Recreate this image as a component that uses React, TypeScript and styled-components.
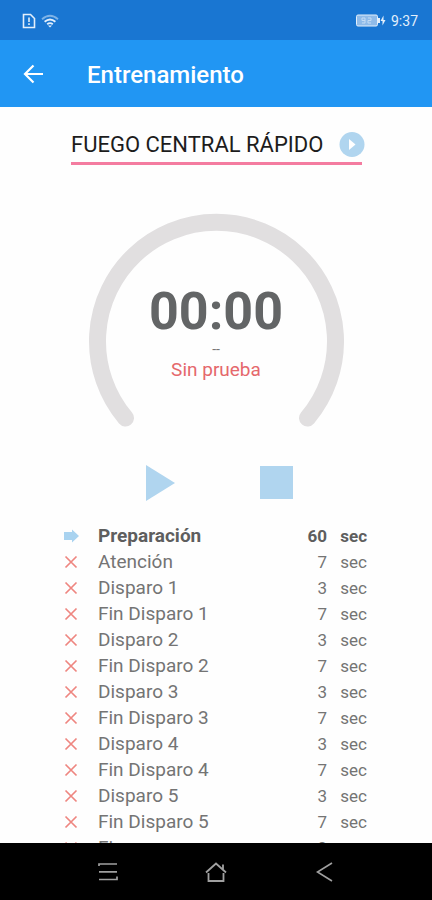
import React from "react";
import styled, { createGlobalStyle } from "styled-components";

const GlobalStyle = createGlobalStyle`
  *, *::before, *::after { box-sizing: border-box; }
  body {
    margin: 0;
    background: #fefefe;
    font-family: Roboto, "Noto Sans", sans-serif;
  }
  button { border: 0; padding: 0; background: none; cursor: pointer; }
  svg { display: block; }
`;

const Screen = styled.div`
  display: flex;
  flex-direction: column;
  height: 100vh;
  overflow: hidden;
`;

const StatusBar = styled.div`
  display: flex;
  flex: none;
  align-items: center;
  justify-content: space-between;
  height: 40px;
  padding: 1px 14px 0 22px;
  background: #1976d2;
  color: #e3effb;
`;

const StatusGroup = styled.div`
  display: flex;
  align-items: center;
  gap: 5px;
`;

const Clock = styled.time`
  font-size: 14px;
  line-height: 20px;
`;

const AppBar = styled.header`
  display: flex;
  flex: none;
  align-items: center;
  gap: 41px;
  height: 67px;
  padding: 2px 20px 0;
  background: #2196f3;
  color: #fff;
`;

const IconButton = styled.button`
  display: grid;
  place-items: center;
  flex: none;
  color: inherit;
`;

const Title = styled.h1`
  margin: 0;
  font-size: 24px;
  font-weight: 500;
  line-height: 28px;
`;

const Main = styled.main`
  display: flex;
  flex: 1;
  flex-direction: column;
  min-height: 0;
  padding-top: 20px;
  overflow: hidden;
`;

const Picker = styled.div`
  display: flex;
  flex: none;
  align-items: center;
  margin: 0 70px 0 71px;
  height: 38px;
  border-bottom: 3px solid #f47ca0;
  color: #b0d5ef;
`;

const ExerciseSelect = styled.select`
  flex: 1;
  min-width: 0;
  padding: 0;
  border: 0;
  appearance: none;
  background: transparent;
  color: #1c1c1c;
  font-family: inherit;
  font-size: 22px;
  line-height: 30px;
`;

const PickerButton = styled(IconButton)`
  margin-right: -3px;
`;

const Dial = styled.section`
  display: grid;
  flex: none;
  align-self: center;
  margin-top: 48px;
  > * { grid-area: 1 / 1; }
`;

const Readout = styled.div`
  display: flex;
  flex-direction: column;
  align-items: center;
  padding-top: 69px;
`;

const Time = styled.div`
  color: #636566;
  font-size: 52px;
  font-weight: 700;
  line-height: 60px;
`;

const Series = styled.div`
  color: #777;
  font-size: 14px;
  line-height: 14px;
`;

const Phase = styled.div`
  color: #e5686c;
  font-size: 19px;
  line-height: 28px;
`;

const Controls = styled.div`
  display: flex;
  flex: none;
  justify-content: center;
  gap: 80px;
  margin-top: 34px;
  padding-left: 4px;
  color: #b0d5ef;
`;

const Steps = styled.table`
  flex: none;
  align-self: stretch;
  margin: 20px 65px 0 64px;
  border-collapse: collapse;
  table-layout: fixed;
`;

const StepRow = styled.tr<{ $active: boolean }>`
  height: 26px;
  color: ${(p) => (p.$active ? "#5e5e5e" : "#747474")};
  font-weight: ${(p) => (p.$active ? 700 : 400)};
`;

const StateCell = styled.td`
  width: 34px;
  padding: 0;
`;

const NameCell = styled.th`
  padding: 0;
  font-size: 19px;
  font-weight: inherit;
  line-height: 26px;
  text-align: left;
`;

const ValueCell = styled.td`
  width: 40px;
  padding: 0;
  font-size: 17px;
  line-height: 26px;
  text-align: right;
`;

const NavBar = styled.nav`
  display: grid;
  flex: none;
  grid-template-columns: repeat(3, 1fr);
  height: 57px;
  padding: 0 12.5%;
  background: #000;
  color: #a0a0a0;
`;

const steps: [string, number][] = [
  ["Preparación", 60],
  ["Atención", 7],
  ["Disparo 1", 3],
  ["Fin Disparo 1", 7],
  ["Disparo 2", 3],
  ["Fin Disparo 2", 7],
  ["Disparo 3", 3],
  ["Fin Disparo 3", 7],
  ["Disparo 4", 3],
  ["Fin Disparo 4", 7],
  ["Disparo 5", 3],
  ["Fin Disparo 5", 7],
  ["Fin", 0],
];

const SimIcon = () => (
  <svg width="14" height="16" viewBox="0 0 14 16" fill="none" stroke="currentColor" strokeWidth="1.6">
    <path d="M1.500 1.500h7l4 4v9h-11z" />
    <path d="M7 4.500v4.500M7 10.300v1.700" />
  </svg>
);

const WifiIcon = () => (
  <svg width="18" height="14" viewBox="0 0 18 14" fill="none" stroke="currentColor" strokeWidth="1.8">
    <path d="M1 5.200q8-7 16 0" opacity=".5" />
    <path d="M3.600 7.800q5.400-4.600 10.800 0M6.200 10.300q2.800-2.400 5.600 0" />
    <path d="M7 11.500h4L9 13.500z" fill="currentColor" stroke="none" />
  </svg>
);

const BatteryIcon = () => (
  <svg width="31" height="13" viewBox="0 0 31 13" fill="none" stroke="currentColor">
    <rect x="1.500" y="1" width="21" height="11" rx="1.500" fill="#8fbbe9" />
    <path d="M24 4v5" strokeWidth="2" />
    <path d="M10 6.500H7V4h3v5H7M13 4h3v2.500h-3V9h3" stroke="#c5dcf4" />
    <path d="M28.500 1.500l-3 5.500h2v4.500l3-5.500h-2z" fill="currentColor" stroke="none" />
  </svg>
);

const BackIcon = () => (
  <svg width="26" height="24" viewBox="0 0 26 24" fill="none" stroke="currentColor" strokeWidth="2.200">
    <path d="M23 11H5M13.500 2.500L5 11l8.500 8.500" />
  </svg>
);

const PlayCircleIcon = () => (
  <svg width="26" height="26" viewBox="0 0 26 26">
    <circle cx="13" cy="12.500" r="12.500" fill="currentColor" />
    <path d="M10 7l6.500 5.500-6.500 5.500z" fill="#fff" />
  </svg>
);

const PlayIcon = () => (
  <svg width="36" height="40" viewBox="0 0 36 40">
    <path d="M4 2l29 18L4 38z" fill="currentColor" />
  </svg>
);

const StopIcon = () => (
  <svg width="36" height="40" viewBox="0 0 36 40">
    <path d="M2 3h33v33H2z" fill="currentColor" />
  </svg>
);

const CurrentIcon = () => (
  <svg width="16" height="14" viewBox="0 0 16 14" role="img" aria-label="Actual">
    <path d="M0 3h8V.5L15 7l-7 6.500V11H0z" fill="#a9d3f0" />
  </svg>
);

const CrossIcon = () => (
  <svg width="14" height="14" viewBox="0 0 14 14" role="img" aria-label="Pendiente">
    <path d="M1.500 1.500l11 11M12.500 1.500l-11 11" stroke="#ee8680" strokeWidth="1.700" />
  </svg>
);

const MenuIcon = () => (
  <svg width="20" height="20" viewBox="0 0 20 20" fill="none" stroke="currentColor" strokeWidth="1.700">
    <path d="M1 4V2h18M1 9.800h18M1 17.500h18v-3" />
  </svg>
);

const HomeIcon = () => (
  <svg width="22" height="20" viewBox="0 0 22 20" fill="none" stroke="currentColor" strokeWidth="1.800">
    <path d="M1 10.500L11 1.500l10 9M18 7.500V2.500M3.500 11v8h15v-8" />
  </svg>
);

const PreviousIcon = () => (
  <svg width="18" height="20" viewBox="0 0 18 20" fill="none" stroke="currentColor" strokeWidth="1.600">
    <path d="M17 1L2.500 10L17 19" />
  </svg>
);

export default function App() {
  return (
    <Screen>
      <GlobalStyle />
      <StatusBar>
        <StatusGroup>
          <SimIcon />
          <WifiIcon />
        </StatusGroup>
        <StatusGroup>
          <BatteryIcon />
          <Clock>9:37</Clock>
        </StatusGroup>
      </StatusBar>
      <AppBar>
        <IconButton aria-label="Volver">
          <BackIcon />
        </IconButton>
        <Title>Entrenamiento</Title>
      </AppBar>
      <Main>
        <Picker>
          <ExerciseSelect aria-label="Ejercicio">
            <option>FUEGO CENTRAL RÁPIDO</option>
          </ExerciseSelect>
          <PickerButton aria-label="Elegir ejercicio">
            <PlayCircleIcon />
          </PickerButton>
        </Picker>
        <Dial>
          <svg width="256" height="216" viewBox="0 0 256 216" fill="none" aria-hidden="true">
            <path
              d="M37.500 205A119 119 0 1 1 219.500 205"
              stroke="#e1dfe0"
              strokeWidth="17"
              strokeLinecap="round"
            />
          </svg>
          <Readout>
            <Time>00:00</Time>
            <Series>--</Series>
            <Phase>Sin prueba</Phase>
          </Readout>
        </Dial>
        <Controls>
          <IconButton aria-label="Iniciar">
            <PlayIcon />
          </IconButton>
          <IconButton aria-label="Detener">
            <StopIcon />
          </IconButton>
        </Controls>
        <Steps>
          <tbody>
            {steps.map(([name, seconds], i) => (
              <StepRow key={name} $active={i === 0}>
                <StateCell>{i === 0 ? <CurrentIcon /> : <CrossIcon />}</StateCell>
                <NameCell scope="row">{name}</NameCell>
                <ValueCell>{seconds}</ValueCell>
                <ValueCell>sec</ValueCell>
              </StepRow>
            ))}
          </tbody>
        </Steps>
      </Main>
      <NavBar>
        <IconButton aria-label="Recientes">
          <MenuIcon />
        </IconButton>
        <IconButton aria-label="Inicio">
          <HomeIcon />
        </IconButton>
        <IconButton aria-label="Atrás">
          <PreviousIcon />
        </IconButton>
      </NavBar>
    </Screen>
  );
}
